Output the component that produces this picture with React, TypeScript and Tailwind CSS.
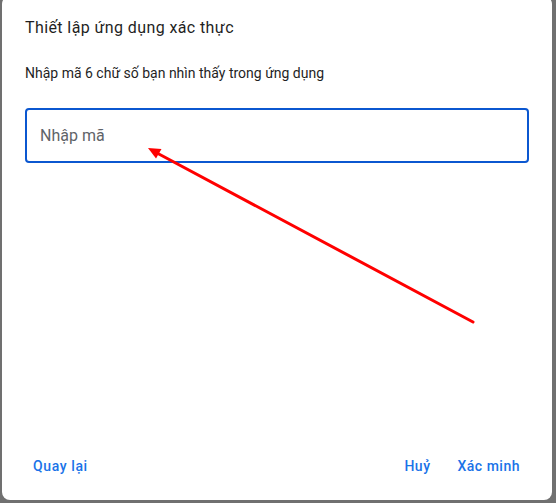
import { useState } from 'react';

function PointerArrow() {
  return (
    <svg
      className="pointer-events-none absolute left-0 top-0"
      width={556}
      height={503}
      viewBox="0 0 556 503"
    >
      <line x1={473} y1={322} x2={157} y2={153} stroke="#ff0000" strokeWidth={3} strokeLinecap="round" />
      <polygon points="148,148 161.5,149 156,158.5" fill="#ff0000" />
    </svg>
  );
}

export default function App() {
  const [code, setCode] = useState('');

  return (
    <div className="relative h-[503px] w-[556px] overflow-hidden bg-[#707070] font-['Roboto',sans-serif]">
      <div className="ml-[2px] mt-[-4px] flex h-[504px] w-[550px] flex-col rounded-lg bg-white pl-[23px] pr-[21px] pt-[20px] pb-[16px]">
        <h2 className="text-base leading-6 font-normal tracking-[0.4px] text-[#1f1f1f]">Thiết lập ứng dụng xác thực</h2>
        <p className="mt-[23px] text-sm leading-5 text-[#1f1f1f]">
          Nhập mã 6 chữ số bạn nhìn thấy trong ứng dụng
        </p>

        <input
          value={code}
          onChange={(e) => setCode(e.target.value)}
          placeholder="Nhập mã"
          className="mt-[25px] h-[55px] w-[504px] rounded border-2 border-[#0b57d0] px-[13px] text-base text-[#1f1f1f] outline-none placeholder:text-[#5f6368]"
        />

        <div className="mt-auto flex items-center justify-between">
          <button type="button" className="h-9 rounded px-2 text-sm font-medium tracking-[0.6px] text-[#1a73e8]">
            Quay lại
          </button>
          <div className="mr-[3px] flex items-center gap-[11px]">
            <button type="button" className="h-9 rounded px-2 text-sm font-medium tracking-[0.5px] text-[#1a73e8]">
              Huỷ
            </button>
            <button type="button" className="h-9 rounded px-2 text-sm font-medium tracking-[0.5px] text-[#1a73e8]">
              Xác minh
            </button>
          </div>
        </div>
      </div>

      <PointerArrow />
    </div>
  );
}
